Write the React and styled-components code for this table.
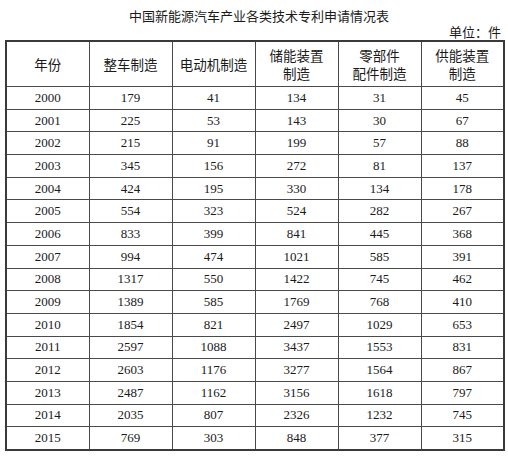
import React from "react";
import styled, { createGlobalStyle } from "styled-components";

const GlobalStyle = createGlobalStyle`
  html, body {
    margin: 0;
    padding: 0;
    background: #ffffff;
  }
`;

const headers = [
  ["年份"],
  ["整车制造"],
  ["电动机制造"],
  ["储能装置", "制造"],
  ["零部件", "配件制造"],
  ["供能装置", "制造"],
];

const rows = [
  [2000, 179, 41, 134, 31, 45],
  [2001, 225, 53, 143, 30, 67],
  [2002, 215, 91, 199, 57, 88],
  [2003, 345, 156, 272, 81, 137],
  [2004, 424, 195, 330, 134, 178],
  [2005, 554, 323, 524, 282, 267],
  [2006, 833, 399, 841, 445, 368],
  [2007, 994, 474, 1021, 585, 391],
  [2008, 1317, 550, 1422, 745, 462],
  [2009, 1389, 585, 1769, 768, 410],
  [2010, 1854, 821, 2497, 1029, 653],
  [2011, 2597, 1088, 3437, 1553, 831],
  [2012, 2603, 1176, 3277, 1564, 867],
  [2013, 2487, 1162, 3156, 1618, 797],
  [2014, 2035, 807, 2326, 1232, 745],
  [2015, 769, 303, 848, 377, 315],
];

const Page = styled.div`
  width: 508px;
  padding: 8px 3px 0 5px;
  box-sizing: border-box;
  font-family: "Noto Sans CJK SC", sans-serif;
  color: #1a1a1a;
`;

const Title = styled.div`
  text-align: center;
  font-size: 13px;
  line-height: 16px;
  padding-left: 8px;
`;

const Unit = styled.div`
  text-align: right;
  font-size: 13px;
  line-height: 16px;
  padding-right: 4px;
`;

const Table = styled.table`
  width: 500px;
  border-collapse: collapse;
  table-layout: fixed;
  border: 2px solid #3a3a3a;
`;

const HeadCell = styled.th`
  height: 44px;
  padding: 0;
  border: 1px solid #4a4a4a;
  font-weight: normal;
  font-size: 13.5px;
  line-height: 18px;
  text-align: center;
  vertical-align: middle;
`;

const Cell = styled.td`
  height: 21.7px;
  padding: 0;
  border: 1px solid #4a4a4a;
  font-family: "Liberation Serif", serif;
  font-size: 13px;
  text-align: center;
  vertical-align: middle;
`;

export default function App() {
  return (
    <Page>
      <GlobalStyle />
      <Title>中国新能源汽车产业各类技术专利申请情况表</Title>
      <Unit>单位：件</Unit>
      <Table>
        <thead>
          <tr>
            {headers.map((h, i) => (
              <HeadCell key={i}>
                {h.map((line, j) => (
                  <div key={j}>{line}</div>
                ))}
              </HeadCell>
            ))}
          </tr>
        </thead>
        <tbody>
          {rows.map((r) => (
            <tr key={r[0]}>
              {r.map((v, i) => (
                <Cell key={i}>{v}</Cell>
              ))}
            </tr>
          ))}
        </tbody>
      </Table>
    </Page>
  );
}
